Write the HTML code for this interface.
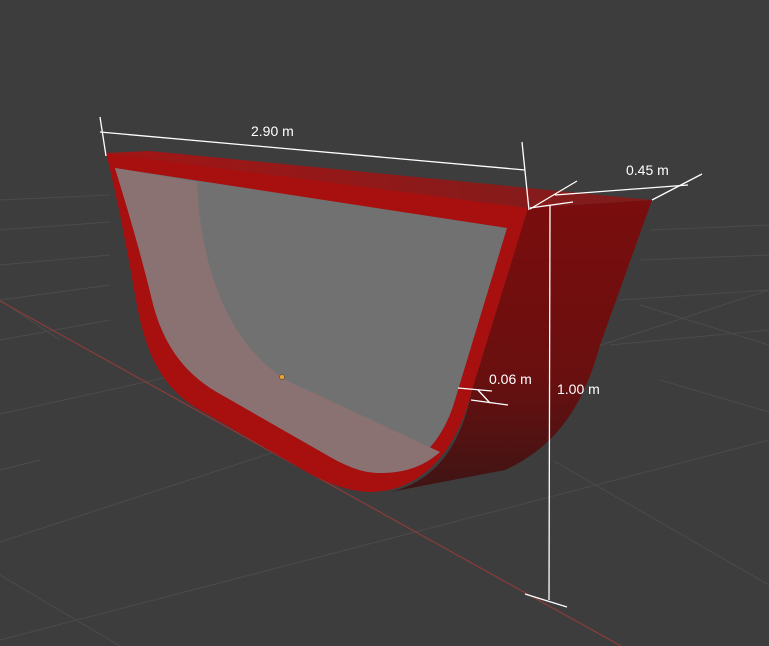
<!DOCTYPE html>
<html><head><meta charset="utf-8"><style>
html,body{margin:0;padding:0;background:#3d3d3d;}
svg{display:block}
text{font-family:"Liberation Sans",sans-serif;font-size:14px;fill:#fff}
</style></head><body>
<svg width="769" height="646" viewBox="0 0 769 646" xmlns="http://www.w3.org/2000/svg">
<defs>
<linearGradient id="side" x1="0" y1="0" x2="0" y2="1">
<stop offset="0" stop-color="#7a0d0d"/><stop offset="0.6" stop-color="#6a0f0f"/><stop offset="1" stop-color="#3e1414"/>
</linearGradient>
<linearGradient id="top" x1="0" y1="0" x2="1" y2="0">
<stop offset="0" stop-color="#a21616"/><stop offset="1" stop-color="#7e1c1c"/>
</linearGradient>
</defs>
<rect width="769" height="646" fill="#3d3d3d"/>
<g stroke="#4b4b4b" stroke-width="1" fill="none">
<line x1="0" y1="542" x2="769" y2="290"/>
<line x1="0" y1="414" x2="200" y2="370"/>
<line x1="0" y1="640" x2="769" y2="440"/>
<line x1="0" y1="575" x2="120" y2="646"/>
<line x1="554" y1="461" x2="769" y2="585"/>
<line x1="660" y1="380" x2="769" y2="412"/>
<line x1="0" y1="340" x2="110" y2="320"/>
<line x1="0" y1="300" x2="110" y2="285"/>
<line x1="0" y1="265" x2="110" y2="255"/>
<line x1="0" y1="230" x2="110" y2="222"/>
<line x1="0" y1="200" x2="110" y2="195"/>
<line x1="650" y1="230" x2="769" y2="225"/>
<line x1="640" y1="260" x2="769" y2="255"/>
<line x1="620" y1="300" x2="769" y2="290"/>
<line x1="610" y1="345" x2="769" y2="330"/>
<line x1="640" y1="305" x2="769" y2="345"/>
<line x1="0" y1="300" x2="60" y2="340"/>
<line x1="0" y1="470" x2="40" y2="460"/>
</g>
<line x1="0" y1="301" x2="621" y2="646" stroke="#8a3b3b" stroke-width="1.2"/>
<path d="M106,153 L150,151 L652,200 L528,208 Z" fill="url(#top)"/>
<path d="M528,208 L652,200 L600,345 C585,400 560,445 505,470 L390,492 C440,480 462,440 472,390 Z" fill="url(#side)"/>
<path d="M106,153 L528,208 L472,390 C460,440 430,490 372,492 C350,492 330,484 310,474 L200,410 C160,388 145,350 136,300 C128,255 118,200 106,153 Z" fill="#a81010"/>
<path d="M115,168 L507,228 L455,400 C442,445 412,472 380,473 C362,473 347,466 332,458 L222,395 C185,375 163,345 152,300 C142,258 128,210 115,168 Z" fill="#717171"/>
<path d="M115,168 L197,182 C200,260 225,345 290,382 L440,452 C422,468 402,473 380,473 C362,473 347,466 332,458 L222,395 C185,375 163,345 152,300 C142,258 128,210 115,168 Z" fill="#8b7272"/>
<circle cx="282" cy="377" r="2.5" fill="#f0a030" stroke="#333" stroke-width="0.5"/>
<g stroke="#fff" stroke-width="1.3" fill="none">
<line x1="100" y1="132" x2="525" y2="170"/>
<line x1="100" y1="117" x2="106" y2="156"/>
<line x1="522" y1="142" x2="529" y2="210"/>
<line x1="555" y1="195" x2="688" y2="185"/>
<line x1="530" y1="209" x2="577" y2="181"/>
<line x1="652" y1="200" x2="702" y2="174"/>
<line x1="550" y1="205" x2="549" y2="600"/>
<line x1="530" y1="208" x2="573" y2="202"/>
<line x1="525" y1="594" x2="567" y2="607"/>
<line x1="458" y1="388" x2="492" y2="391"/>
<line x1="471" y1="400" x2="508" y2="405"/>
<line x1="478" y1="390" x2="490" y2="403"/>
</g>
<text x="251" y="136">2.90 m</text>
<text x="626" y="175">0.45 m</text>
<text x="489" y="384">0.06 m</text>
<text x="557" y="394">1.00 m</text>
</svg>
</body></html>
